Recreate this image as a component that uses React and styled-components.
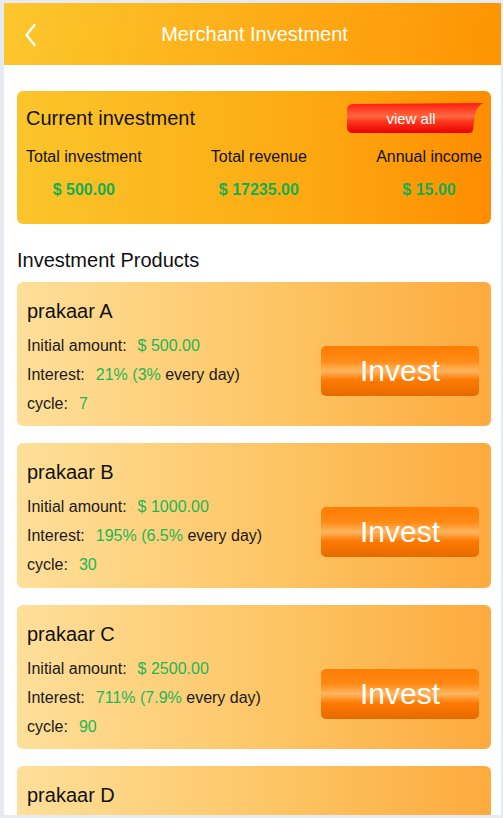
import React from "react";
import styled, { createGlobalStyle } from "styled-components";

const Global = createGlobalStyle`
  html, body { margin: 0; padding: 0; }
  body {
    background: #e6eaf1;
    padding: 3px 2px 3px 4px;
    font-family: "Liberation Sans", Arial, sans-serif;
  }
  * { box-sizing: border-box; }
`;

const Frame = styled.div`
  width: 497px;
  height: 812px;
  overflow: hidden;
  background: #fff;
`;

const Header = styled.header`
  height: 62px;
  display: flex;
  align-items: center;
  position: relative;
  justify-content: center;
  padding-left: 4px;
  background: linear-gradient(100deg, #fcc72d 0%, #fe9402 100%);
`;

const Back = styled.button`
  position: absolute;
  left: 14px;
  top: 20px;
  width: 24px;
  height: 24px;
  padding: 0;
  border: 0;
  background: none;
  display: flex;
`;

const Title = styled.h1`
  margin: 0;
  color: #fff;
  font-size: 20px;
  font-weight: normal;
`;

const Content = styled.main`
  padding: 26px 10px 0 13px;
`;

const SummaryCard = styled.section`
  border-radius: 6px;
  padding: 12px 9px 24px 9px;
  background: linear-gradient(90deg, #fbc52b 0%, #fdaa12 60%, #fe8d00 100%);
`;

const SummaryHead = styled.div`
  display: flex;
  align-items: center;
  justify-content: space-between;
  height: 31px;
`;

const CardTitle = styled.h2`
  margin: 0;
  font-size: 20px;
  font-weight: normal;
  color: #111;
`;

const ViewAll = styled.button`
  position: relative;
  width: 136px;
  height: 31px;
  margin-right: -1px;
  padding: 0 8px 0 0;
  border: 0;
  background: none;
  color: #fff;
  font-family: inherit;
  font-size: 15px;
  display: flex;
  align-items: center;
  justify-content: center;
  svg { position: absolute; inset: 0; }
  span { position: relative; }
`;

const Stats = styled.div`
  display: flex;
  justify-content: space-between;
  margin-top: 13px;
`;

const Stat = styled.div`
  display: flex;
  flex-direction: column;
  align-items: center;
  gap: 13px;
`;

const StatLabel = styled.div`
  font-size: 16px;
  line-height: 20px;
  color: #111;
`;

const StatValue = styled.div`
  font-size: 16px;
  line-height: 20px;
  font-weight: bold;
  color: #16ae4f;
`;

const SectionTitle = styled.h2`
  margin: 24px 0 10px 0;
  font-size: 20px;
  line-height: 24px;
  font-weight: normal;
  color: #111;
`;

const List = styled.div`
  display: flex;
  flex-direction: column;
  gap: 17px;
`;

const ProductCard = styled.article`
  border-radius: 6px;
  padding: 17px 12px 8.4px 10px;
  background: linear-gradient(90deg, #fedf9a 0%, #fdc564 55%, #fdaa3e 100%);
`;

const ProductName = styled.h3`
  margin: 0 0 8px 0;
  font-size: 20px;
  line-height: 24px;
  font-weight: normal;
  color: #111;
`;

const Body = styled.div`
  display: flex;
  align-items: center;
  justify-content: space-between;
`;

const Rows = styled.div`
  display: flex;
  flex-direction: column;
`;

const Row = styled.div`
  font-size: 16px;
  line-height: 29px;
  color: #1a1a1a;
`;

const Label = styled.span`
  margin-right: 11px;
`;

const Green = styled.span`
  color: #1fb555;
`;

const InvestButton = styled.button`
  width: 158px;
  height: 50px;
  margin-bottom: 7px;
  border: 0;
  border-radius: 5px;
  color: #fff;
  font-family: inherit;
  font-size: 30px;
  background: linear-gradient(
    180deg,
    #ff7d04 0%,
    #ff8a14 30%,
    #ffb560 50%,
    #ff7a02 68%,
    #e56a00 100%
  );
`;

const products = [
  { name: "prakaar A", amount: "$ 500.00", total: "21%", daily: "3%", cycle: "7" },
  { name: "prakaar B", amount: "$ 1000.00", total: "195%", daily: "6.5%", cycle: "30" },
  { name: "prakaar C", amount: "$ 2500.00", total: "711%", daily: "7.9%", cycle: "90" },
  { name: "prakaar D", amount: "$ 5000.00", total: "1260%", daily: "9%", cycle: "140" },
];

export default function App() {
  return (
    <>
      <Global />
      <Frame>
        <Header>
          <Back aria-label="back">
            <svg width="24" height="24" viewBox="0 0 24 24">
              <path d="M16.5 2 L8.5 12 L16.5 22" fill="none" stroke="#fff" strokeWidth="2.4" strokeLinecap="round" strokeLinejoin="round" />
            </svg>
          </Back>
          <Title>Merchant Investment</Title>
        </Header>
        <Content>
          <SummaryCard>
            <SummaryHead>
              <CardTitle>Current investment</CardTitle>
              <ViewAll>
                <svg width="136" height="31" viewBox="0 0 136 31">
                  <defs>
                    <linearGradient id="va" x1="0" y1="0" x2="0" y2="1">
                      <stop offset="0" stopColor="#ff1c12" />
                      <stop offset="0.45" stopColor="#ff6a40" />
                      <stop offset="0.6" stopColor="#ff3a20" />
                      <stop offset="1" stopColor="#e80000" />
                    </linearGradient>
                  </defs>
                  <path d="M6 1 L136 0 Q129 4 128 12 L126 27 Q125.5 30 122 30 L6 30 Q0 30 0 24 L0 7 Q0 1 6 1 Z" fill="url(#va)" />
                </svg>
                <span>view all</span>
              </ViewAll>
            </SummaryHead>
            <Stats>
              <Stat>
                <StatLabel>Total investment</StatLabel>
                <StatValue>$ 500.00</StatValue>
              </Stat>
              <Stat>
                <StatLabel>Total revenue</StatLabel>
                <StatValue>$ 17235.00</StatValue>
              </Stat>
              <Stat>
                <StatLabel>Annual income</StatLabel>
                <StatValue>$ 15.00</StatValue>
              </Stat>
            </Stats>
          </SummaryCard>
          <SectionTitle>Investment Products</SectionTitle>
          <List>
            {products.map((p) => (
              <ProductCard key={p.name}>
                <ProductName>{p.name}</ProductName>
                <Body>
                  <Rows>
                    <Row>
                      <Label>Initial amount:</Label>
                      <Green>{p.amount}</Green>
                    </Row>
                    <Row>
                      <Label>Interest:</Label>
                      <Green>{p.total} ({p.daily}</Green> every day)
                    </Row>
                    <Row>
                      <Label>cycle:</Label>
                      <Green>{p.cycle}</Green>
                    </Row>
                  </Rows>
                  <InvestButton>Invest</InvestButton>
                </Body>
              </ProductCard>
            ))}
          </List>
        </Content>
      </Frame>
    </>
  );
}
